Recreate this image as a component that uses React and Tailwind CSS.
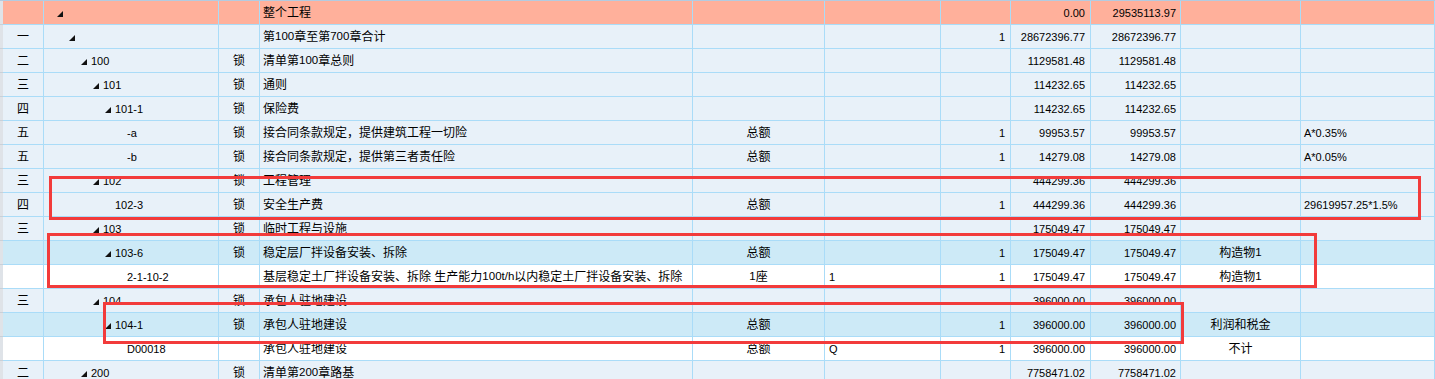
import React from "react";

const COLS =
  "grid grid-cols-[3px_41px_175px_41px_433px_132px_116px_70px_80px_90px_120px_1fr]";

const rows = [
  { bg: "h", c1: "", lv: 0, tri: true, code: "", lock: "", name: "整个工程", unit: "", c6: "", c7: "", c8: "0.00", c9: "29535113.97", c10: "", c11: "" },
  { bg: "n", c1: "一", lv: 1, tri: true, code: "", lock: "", name: "第100章至第700章合计", unit: "", c6: "", c7: "1", c8: "28672396.77", c9: "28672396.77", c10: "", c11: "" },
  { bg: "n", c1: "二", lv: 2, tri: true, code: "100", lock: "锁", name: "清单第100章总则", unit: "", c6: "", c7: "", c8: "1129581.48", c9: "1129581.48", c10: "", c11: "" },
  { bg: "n", c1: "三", lv: 3, tri: true, code: "101", lock: "锁", name: "通则", unit: "", c6: "", c7: "", c8: "114232.65", c9: "114232.65", c10: "", c11: "" },
  { bg: "n", c1: "四", lv: 4, tri: true, code: "101-1", lock: "锁", name: "保险费", unit: "", c6: "", c7: "", c8: "114232.65", c9: "114232.65", c10: "", c11: "" },
  { bg: "n", c1: "五", lv: 5, tri: false, code: "-a", lock: "锁", name: "接合同条款规定，提供建筑工程一切险", unit: "总额", c6: "", c7: "1", c8: "99953.57", c9: "99953.57", c10: "", c11: "A*0.35%" },
  { bg: "n", c1: "五", lv: 5, tri: false, code: "-b", lock: "锁", name: "接合同条款规定，提供第三者责任险", unit: "总额", c6: "", c7: "1", c8: "14279.08", c9: "14279.08", c10: "", c11: "A*0.05%" },
  { bg: "n", c1: "三", lv: 3, tri: true, code: "102", lock: "锁", name: "工程管理", unit: "", c6: "", c7: "", c8: "444299.36", c9: "444299.36", c10: "", c11: "" },
  { bg: "n", c1: "四", lv: 4, tri: false, code: "102-3", lock: "锁", name: "安全生产费", unit: "总额", c6: "", c7: "1", c8: "444299.36", c9: "444299.36", c10: "", c11: "29619957.25*1.5%" },
  { bg: "n", c1: "三", lv: 3, tri: true, code: "103", lock: "锁", name: "临时工程与设施", unit: "", c6: "", c7: "", c8: "175049.47", c9: "175049.47", c10: "", c11: "" },
  { bg: "s", c1: "", lv: 4, tri: true, code: "103-6", lock: "锁", name: "稳定层厂拌设备安装、拆除", unit: "总额", c6: "", c7: "1", c8: "175049.47", c9: "175049.47", c10: "构造物1", c11: "" },
  { bg: "w", c1: "", lv: 5, tri: false, code: "2-1-10-2", lock: "", name: "基层稳定土厂拌设备安装、拆除 生产能力100t/h以内稳定土厂拌设备安装、拆除", unit: "1座", c6: "1", c7: "1", c8: "175049.47", c9: "175049.47", c10: "构造物1", c11: "" },
  { bg: "n", c1: "三", lv: 3, tri: true, code: "104", lock: "锁", name: "承包人驻地建设", unit: "", c6: "", c7: "", c8: "396000.00", c9: "396000.00", c10: "", c11: "" },
  { bg: "s", c1: "", lv: 4, tri: true, code: "104-1", lock: "锁", name: "承包人驻地建设", unit: "总额", c6: "", c7: "1", c8: "396000.00", c9: "396000.00", c10: "利润和税金", c11: "" },
  { bg: "w", c1: "", lv: 5, tri: false, code: "D00018", lock: "", name: "承包人驻地建设", unit: "总额", c6: "Q", c7: "1", c8: "396000.00", c9: "396000.00", c10: "不计", c11: "" },
  { bg: "n", c1: "二", lv: 2, tri: true, code: "200", lock: "锁", name: "清单第200章路基", unit: "", c6: "", c7: "", c8: "7758471.02", c9: "7758471.02", c10: "", c11: "" },
];

const BG = {
  h: "bg-[#ffb09b]",
  n: "bg-[#e8f1f9]",
  s: "bg-[#cdeaf7]",
  w: "bg-white",
};

function Mixed({ text }) {
  const parts = text.split(/([\x21-\x7e]+)/);
  return (
    <>
      {parts.map((p, i) =>
        /^[\x21-\x7e]+$/.test(p) ? (
          <span key={i} className="text-[11.5px]">
            {p}
          </span>
        ) : (
          <span key={i}>{p}</span>
        )
      )}
    </>
  );
}

function Tri() {
  return (
    <svg width="6" height="6" viewBox="0 0 6 6" className="mr-[4px] mt-[2px] shrink-0">
      <polygon points="6,0 6,6 0,6" fill="#111" />
    </svg>
  );
}

const cell = "border-r border-b border-[#aadcf8] flex items-center overflow-hidden whitespace-nowrap h-[24px] pt-[1px]";

function Row({ r }) {
  const bg = BG[r.bg];
  const pad = r.tri ? 13 + 12 * r.lv : 23 + 12 * r.lv;
  return (
    <>
      <div className="bg-[#dfe3e8] border-b border-[#c9d0d8] h-[24px]" />
      <div className={`${cell} ${bg} justify-center text-[12px]`}>{r.c1}</div>
      <div className={`${cell} ${bg} text-[11px]`} style={{ paddingLeft: pad }}>
        {r.tri && <Tri />}
        <span>{r.code}</span>
      </div>
      <div className={`${cell} ${bg} justify-center text-[12px]`}>{r.lock}</div>
      <div className={`${cell} ${bg} pl-[3px] text-[12px]`}>
        <Mixed text={r.name} />
      </div>
      <div className={`${cell} ${bg} justify-center text-[12px]`}>
        <Mixed text={r.unit} />
      </div>
      <div className={`${cell} ${bg} pl-[4px] text-[11px]`}>{r.c6}</div>
      <div className={`${cell} ${bg} justify-end pr-[5px] text-[11px]`}>{r.c7}</div>
      <div className={`${cell} ${bg} justify-end pr-[5px] text-[11px]`}>{r.c8}</div>
      <div className={`${cell} ${bg} justify-end pr-[4px] text-[11px]`}>{r.c9}</div>
      <div className={`${cell} ${bg} justify-center text-[12px]`}>
        <Mixed text={r.c10} />
      </div>
      <div className={`${cell} ${bg} pl-[3px] text-[11px]`}>{r.c11}</div>
    </>
  );
}

export default function App() {
  return (
    <div
      className="relative w-[1435px] h-[379px] overflow-hidden bg-white text-black leading-none"
      style={{ fontFamily: '"Liberation Sans", "Noto Sans CJK SC", sans-serif' }}
    >
      <div className={`${COLS} border-t border-[#b4cbe0]`}>
        {rows.map((r, i) => (
          <Row key={i} r={r} />
        ))}
      </div>
      <div className="absolute left-[49px] top-[176px] w-[1372px] h-[44px] border-[3px] border-[#f23b3b] pointer-events-none" />
      <div className="absolute left-[47px] top-[233px] w-[1270px] h-[55px] border-[3px] border-[#f23b3b] pointer-events-none" />
      <div className="absolute left-[103px] top-[302px] w-[1081px] h-[42px] border-[3px] border-[#f23b3b] pointer-events-none" />
    </div>
  );
}
